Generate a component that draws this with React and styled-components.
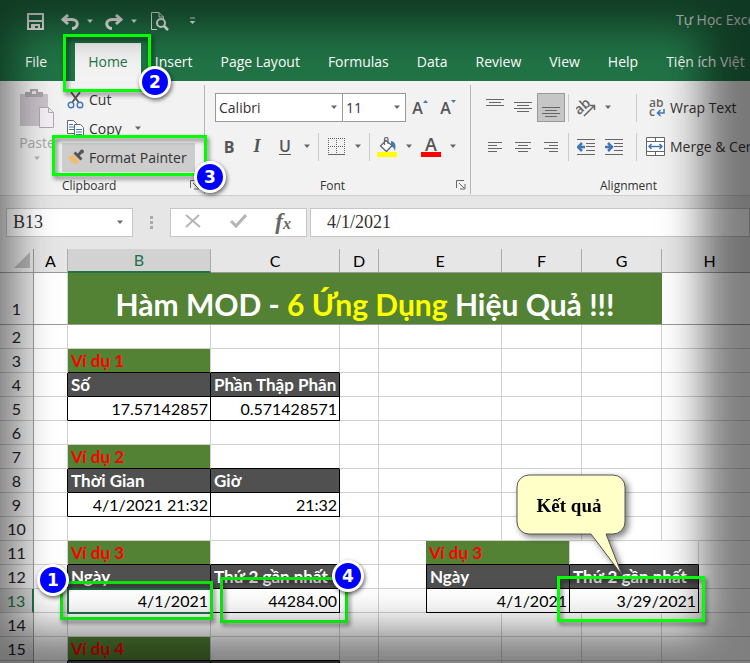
import styled, { createGlobalStyle } from 'styled-components'

const tabs = ['File', 'Home', 'Insert', 'Page Layout', 'Formulas', 'Data', 'Review', 'View', 'Help', 'Tiện ích Việt']

const columns = [
  { name: 'A', width: 34 },
  { name: 'B', width: 143 },
  { name: 'C', width: 129 },
  { name: 'D', width: 39 },
  { name: 'E', width: 123 },
  { name: 'F', width: 80 },
  { name: 'G', width: 80 },
  { name: 'H' },
]

// rows 2..16, only B and C hold values
const rows = [
  { n: 2 },
  { n: 3, b: 'Ví dụ 1', kind: 'title' },
  { n: 4, b: 'Số', c: 'Phần Thập Phân', kind: 'head' },
  { n: 5, b: '17.57142857', c: '0.571428571', kind: 'value' },
  { n: 6 },
  { n: 7, b: 'Ví dụ 2', kind: 'title' },
  { n: 8, b: 'Thời Gian', c: 'Giờ', kind: 'head' },
  { n: 9, b: '4/1/2021 21:32', c: '21:32', kind: 'value' },
  { n: 10 },
  { n: 11, b: 'Ví dụ 3', kind: 'title' },
  { n: 12, b: 'Ngày', c: 'Thứ 2 gần nhất', kind: 'head' },
  { n: 13, b: '4/1/2021', c: '44284.00', kind: 'value', active: true },
  { n: 14 },
  { n: 15, b: 'Ví dụ 4', kind: 'title' },
  { n: 16, kind: 'head' },
]

const Caret = ({ color = '#666' }) => (
  <svg width='8' height='5' viewBox='0 0 8 5'>
    <path d='M1 0.5h6L4 4z' fill={color} />
  </svg>
)

const Launcher = () => (
  <svg width='10' height='10' viewBox='0 0 10 10' fill='none' stroke='#666'>
    <path d='M0.5 8V0.5H8M3 3l5 5M9 4v5H4' />
  </svg>
)

// horizontal strokes given as [x1, x2, y]
const Lines = ({ lines, size = 18, children }) => (
  <svg width={size} height={size} viewBox='0 0 18 18' fill='none' stroke='#666' strokeWidth='1'>
    {lines.map(([a, b, y]) => (
      <path key={y} d={`M${a} ${y}.5H${b}`} />
    ))}
    {children}
  </svg>
)

const QuickAccess = () => (
  <Quick>
    <Tool $w={18} title='Save'>
      <svg width='17' height='17' viewBox='0 0 17 17' fill='none' stroke='#fff' strokeWidth='2'>
        <path d='M1 1h15v15H1zM1 8h15M5 16v-4h7v4' />
        <path d='M7 12v4' />
      </svg>
    </Tool>
    <Tool $w={18} title='Undo'>
      <svg width='18' height='16' viewBox='0 0 18 16' fill='none' stroke='#fff' strokeWidth='3'>
        <path d='M7 1L2 5.5 7 10M2.500 5.500H11c7 0 7 8.500 0 9' />
      </svg>
    </Tool>
    <Caret color='#fff' />
    <Tool $w={18} title='Redo'>
      <svg width='18' height='16' viewBox='0 0 18 16' fill='none' stroke='#fff' strokeWidth='3'>
        <path d='M11 1l5 4.500-5 4.500M15.500 5.500H7c-7 0-7 8.500 0 9' />
      </svg>
    </Tool>
    <Caret color='#fff' />
    <Tool $w={20} title='Print Preview'>
      <svg width='19' height='19' viewBox='0 0 19 19' fill='none' stroke='#fff'>
        <path d='M7 17.500H1.500V0.500H9L13.500 5v2M9 0.500V5h4.500' />
        <circle cx='11' cy='11' r='4' strokeWidth='2' />
        <path d='M14 14l4 4' strokeWidth='2.500' />
      </svg>
    </Tool>
    <Tool $w={8} title='Customize'>
      <svg width='7' height='9' viewBox='0 0 7 9'>
        <path d='M1 0.500h5v1H1zM0.500 4h6l-3 3z' fill='#fff' />
      </svg>
    </Tool>
  </Quick>
)

const ClipboardGroup = () => (
  <Group $width={205}>
    <ClipboardBody>
      <Paste>
        <svg width='36' height='40' viewBox='0 0 36 40'>
          <path d='M1 5h28v32H1z' fill='#c9c3c9' />
          <path d='M6 8V3h5V0h8v3h5v5z' fill='#a8a4a8' />
          <path d='M13 2h4v3h-4z' fill='#e8e6e8' />
          <path d='M20.500 18.500h9l5 5v15h-14z' fill='#f5f0f5' stroke='#b0a8b0' />
          <path d='M29.500 18.500v5h5' fill='none' stroke='#b0a8b0' />
        </svg>
        <span>Paste</span>
        <Caret color='#b5b5b5' />
      </Paste>
      <ClipList>
        <ClipButton>
          <svg width='18' height='18' viewBox='0 0 18 18' fill='none'>
            <path d='M4 1l7.500 10M13 1L5.500 11' stroke='#555' strokeWidth='2' />
            <circle cx='4' cy='14' r='2.800' stroke='#3f78b5' strokeWidth='1.400' />
            <circle cx='13' cy='14' r='2.800' stroke='#3f78b5' strokeWidth='1.400' />
          </svg>
          Cut
        </ClipButton>
        <ClipButton>
          <svg width='18' height='18' viewBox='0 0 18 18' fill='#fff' stroke='#666'>
            <path d='M0.500 0.500h6l3 3v10h-9z' />
            <path d='M2 4.500h4M2 7h5M2 9.500h5' stroke='#3f78b5' />
            <path d='M7.500 4.500h6l3 3v10h-9z' />
            <path d='M9 9.500h6M9 12h6M9 14.500h6' stroke='#3f78b5' />
          </svg>
          Copy
          <Caret />
        </ClipButton>
        <ClipButton $active>
          <svg width='18' height='18' viewBox='0 0 18 18'>
            <path d='M0.500 8.500L6 5.500l7 6.500-5 4z' fill='#efbe74' />
            <path d='M6.500 4.500L8.500 2.500l7 7-2 2z' fill='#555' />
            <path d='M11 6.500L14.500 2.500' stroke='#555' strokeWidth='3' />
            <circle cx='15' cy='2.500' r='2' fill='#555' />
          </svg>
          Format Painter
        </ClipButton>
      </ClipList>
    </ClipboardBody>
    <GroupLabel $left>
      Clipboard
      <Launcher />
    </GroupLabel>
  </Group>
)

const FontGroup = () => (
  <Group $width={266}>
    <GroupBody>
      <ToolRow>
        <Combo $width={128}>
          <select aria-label='Font name'>
            <option>Calibri</option>
          </select>
          <Caret />
        </Combo>
        <Combo $width={63} $joined>
          <select aria-label='Font size'>
            <option>11</option>
          </select>
          <Caret />
        </Combo>
        <Tool $w={28} title='Increase font size'>
          <Letter>A</Letter>
          <svg width='5' height='16' viewBox='0 0 5 16'>
            <path d='M0 3l2.500-3L5 3z' fill='#3f78b5' />
          </svg>
        </Tool>
        <Tool $w={28} title='Decrease font size'>
          <Letter>A</Letter>
          <svg width='5' height='16' viewBox='0 0 5 16'>
            <path d='M0 0h5L2.500 3z' fill='#3f78b5' />
          </svg>
        </Tool>
      </ToolRow>
      <ToolRow>
        <Tool $w={28}><Letter $heavy>B</Letter></Tool>
        <Tool $w={28}><Italic>I</Italic></Tool>
        <Tool $w={28}><Underline>U</Underline></Tool>
        <Tool $w={16} title='Underline style'><Caret /></Tool>
        <Separator />
        <Tool $w={28} title='Borders'>
          <svg width='17' height='17' viewBox='0 0 17 17' fill='none' stroke='#666'>
            <path d='M0.500 0v16M8.500 0v16M16.500 0v16M0 0.500h17M0 8.500h17' strokeDasharray='1 1' />
            <path d='M0 16.500h17' />
          </svg>
        </Tool>
        <Tool $w={16} title='Border style'><Caret /></Tool>
        <Separator />
        <Tool $w={28} title='Fill color'>
          <svg width='20' height='20' viewBox='0 0 20 20' fill='none'>
            <path d='M14 4c5 1 5 5 4 10-1-3-2-4-4-5z' fill='#3f78b5' />
            <path d='M9 3.500L3.500 9l6 5.500L15 8.500z' fill='#fff' stroke='#666' strokeWidth='1.300' />
            <path d='M7.500 8V2c0-2 3.500-2 3.500 0v5' stroke='#666' strokeWidth='1.200' />
            <path d='M0 15h20v5H0z' fill='#ff0' />
          </svg>
        </Tool>
        <Tool $w={16} title='Fill color menu'><Caret /></Tool>
        <Tool $w={28} title='Font color'>
          <FontColor>A</FontColor>
        </Tool>
        <Tool $w={16} title='Font color menu'><Caret /></Tool>
      </ToolRow>
    </GroupBody>
    <GroupLabel>
      <span>Font</span>
      <Launcher />
    </GroupLabel>
  </Group>
)

const AlignmentGroup = () => (
  <Group $width={316}>
    <GroupBody>
      <ToolRow>
        <Tool $w={28} title='Top align'><Lines lines={[[0, 18, 0], [3, 15, 3], [0, 18, 6]]} /></Tool>
        <Tool $w={28} title='Middle align'><Lines lines={[[0, 18, 3], [3, 15, 6], [0, 18, 9], [3, 15, 12]]} /></Tool>
        <Tool $w={28} $pressed title='Bottom align'><Lines lines={[[0, 18, 8], [3, 15, 11], [0, 18, 14], [3, 15, 17]]} /></Tool>
        <Separator />
        <Tool $w={28} title='Orientation'>
          <svg width='20' height='18' viewBox='0 0 20 18' fill='none' stroke='#666' strokeWidth='1.500'>
            <text x='0' y='13' transform='rotate(-42 6 11)' fontFamily='Open Sans, sans-serif' fontSize='14' fontWeight='600' fill='#666' stroke='none'>ab</text>
            <path d='M8 17L18 7M14 6.500h4.500V11' />
          </svg>
        </Tool>
        <Tool $w={16} title='Orientation menu'><Caret /></Tool>
        <Gap $w={17} />
        <Separator />
        <TextTool>
          <svg width='20' height='18' viewBox='0 0 20 18' fill='none'>
            <text x='3' y='8' fontFamily='Open Sans, sans-serif' fontSize='12' fontWeight='600' fill='#666'>ab</text>
            <text x='3' y='17' fontFamily='Open Sans, sans-serif' fontSize='12' fontWeight='600' fill='#666'>c</text>
            <path d='M18 10v4h-6M14.500 11L11.500 14l3 3' stroke='#3f78b5' strokeWidth='1.500' />
          </svg>
          Wrap Text
        </TextTool>
      </ToolRow>
      <ToolRow>
        <Tool $w={28} title='Align left'><Lines lines={[[2, 16, 4], [2, 11, 7], [2, 16, 10], [2, 11, 13]]} /></Tool>
        <Tool $w={28} title='Center'><Lines lines={[[1, 17, 4], [4, 14, 7], [1, 17, 10], [4, 14, 13]]} /></Tool>
        <Tool $w={28} title='Align right'><Lines lines={[[2, 16, 4], [7, 16, 7], [2, 16, 10], [7, 16, 13]]} /></Tool>
        <Separator />
        <Tool $w={28} title='Decrease indent'>
          <Lines lines={[[0, 18, 1], [9, 18, 5], [9, 18, 8], [9, 18, 12], [0, 18, 16]]}>
            <path d='M8 9H2M5 5L1 9l4 4' stroke='#3f78b5' strokeWidth='2.500' />
          </Lines>
        </Tool>
        <Tool $w={28} title='Increase indent'>
          <Lines lines={[[0, 18, 1], [9, 18, 5], [9, 18, 8], [9, 18, 12], [0, 18, 16]]}>
            <path d='M0 9h6M3 5l4 4-4 4' stroke='#3f78b5' strokeWidth='2.500' />
          </Lines>
        </Tool>
        <Gap $w={5} />
        <Separator />
        <TextTool>
          <svg width='20' height='19' viewBox='0 0 20 19' fill='#fff' stroke='#666'>
            <path d='M0.500 0.500h18v18h-18zM0.500 4.500h18M0.500 14.500h18M9.500 0.500v4M9.500 14.500v4' />
            <path d='M3 9.500h13M5.500 7L3 9.500 5.500 12M13.500 7l2.500 2.500-2.500 2.500' fill='none' stroke='#3f78b5' strokeWidth='1.500' />
          </svg>
          Merge &amp; Center
        </TextTool>
      </ToolRow>
    </GroupBody>
    <GroupLabel>
      <span>Alignment</span>
    </GroupLabel>
  </Group>
)

const FormulaBar = () => (
  <Formula>
    <NameBox>
      <input aria-label='Name box' defaultValue='B13' />
      <Caret />
    </NameBox>
    <Grip>
      <i />
      <i />
      <i />
    </Grip>
    <FormulaTools>
      <button title='Cancel'>
        <svg width='16' height='14' viewBox='0 0 16 14' fill='none' stroke='#b5b5b5' strokeWidth='2'>
          <path d='M1 1l14 12M14 1L1 13' />
        </svg>
      </button>
      <button title='Enter'>
        <svg width='17' height='14' viewBox='0 0 17 14' fill='none' stroke='#b5b5b5' strokeWidth='3'>
          <path d='M1 7l5 5L16 1' />
        </svg>
      </button>
      <button title='Insert function'>
        <Fx>f<small>x</small></Fx>
      </button>
    </FormulaTools>
    <FormulaInput aria-label='Formula' defaultValue='4/1/2021' />
  </Formula>
)

const Sheet = () => (
  <Grid>
    <colgroup>
      <col width='34' />
      {columns.map((col) => (
        <col key={col.name} width={col.width} />
      ))}
    </colgroup>
    <thead>
      <tr>
        <Corner>
          <svg width='16' height='16' viewBox='0 0 16 16'>
            <path d='M16 0v16H0z' fill='#b4b4b4' />
          </svg>
        </Corner>
        {columns.map((col) => (
          <ColHead key={col.name} $active={col.name === 'B'}>{col.name}</ColHead>
        ))}
      </tr>
    </thead>
    <tbody>
      <BannerRow>
        <RowHead $tall>1</RowHead>
        <Cell />
        <Banner colSpan={6}>
          Hàm MOD - <em>6 Ứng Dụng</em> Hiệu Quả !!!
        </Banner>
        <Cell />
      </BannerRow>
      {rows.map((row, i) => {
        const boxed = row.kind === 'head' || row.kind === 'value'
        const line = boxed || (rows[i + 1] && rows[i + 1].kind === 'head')
        return (
          <tr key={row.n}>
            <RowHead $active={row.active}>{row.n}</RowHead>
            <Cell $boxRight={boxed} />
            <Cell $kind={row.kind} $boxBottom={line} $boxRight={boxed} $active={row.active}>{row.b}</Cell>
            <Cell $kind={boxed ? row.kind : undefined} $boxBottom={line} $boxRight={boxed}>{row.c}</Cell>
            <Cell />
            <Cell />
            <Cell />
            <Cell />
            <Cell />
          </tr>
        )
      })}
    </tbody>
  </Grid>
)

const App = () => {
  return (
    <Page>
      <GlobalStyle />
      <TitleBar>
        <QuickAccess />
        <DocName>Tự Học Excel</DocName>
      </TitleBar>
      <TabBar>
        {tabs.map((tab) => (
          <Tab key={tab} href='#' $active={tab === 'Home'}>{tab}</Tab>
        ))}
      </TabBar>
      <Ribbon>
        <ClipboardGroup />
        <FontGroup />
        <AlignmentGroup />
      </Ribbon>
      <FormulaBar />
      <SheetArea>
        <Sheet />
        <PastedTable>
          <tbody>
            <tr>
              <Cell $kind='title' $boxBottom>Ví dụ 3</Cell>
              <Cell $boxBottom />
            </tr>
            <tr>
              <Cell $kind='head' $boxBottom $boxRight $boxLeft>Ngày</Cell>
              <Cell $kind='head' $boxBottom $boxRight>Thứ 2 gần nhất</Cell>
            </tr>
            <tr>
              <Cell $kind='value' $boxBottom $boxRight $boxLeft>4/1/2021</Cell>
              <Cell $kind='value' $boxBottom $boxRight>3/29/2021</Cell>
            </tr>
          </tbody>
        </PastedTable>
      </SheetArea>

      <Vignette />

      <Callout>
        <svg width='112' height='104' viewBox='0 0 112 104'>
          <path
            d='M13 1H97a12 12 0 0 1 12 12V48a12 12 0 0 1-12 12H90L106 101 75 60H13A12 12 0 0 1 1 48V13A12 12 0 0 1 13 1z'
            fill='#ffffc8'
            stroke='#555'
          />
        </svg>
        <span>Kết quả</span>
      </Callout>

      <Highlight $x={63} $y={34} $w={88} $h={58} />
      <Highlight $x={52} $y={135} $w={155} $h={41} />
      <Highlight $x={60} $y={581} $w={153} $h={39} $dim />
      <Highlight $x={220} $y={577} $w={128} $h={46} $dim />
      <Highlight $x={557} $y={576} $w={148} $h={46} />
      <Badge $x={53} $y={580}>1</Badge>
      <Badge $x={155} $y={82}>2</Badge>
      <Badge $x={210} $y={177}>3</Badge>
      <Badge $x={348} $y={576}>4</Badge>
    </Page>
  )
}

export default App

const uiFont = `'Open Sans', 'Noto Sans', sans-serif`
const sheetFont = `Lato, 'Open Sans', sans-serif`
const serifFont = `'Liberation Serif', serif`

const GlobalStyle = createGlobalStyle`
  * {
    box-sizing: border-box;
  }
  body {
    margin: 0;
    height: 100vh;
    overflow: hidden;
    background: #fff;
    font: 14px ${uiFont};
    color: #333;
  }
  button, input, select {
    font: inherit;
    color: inherit;
    border: 0;
    padding: 0;
    background: none;
    outline: none;
  }
  svg {
    flex: none;
  }
`
const Page = styled.div`
  position: relative;
  height: 100vh;
  overflow: hidden;
`
const TitleBar = styled.header`
  display: flex;
  align-items: center;
  justify-content: space-between;
  height: 43px;
  padding-left: 26px;
  background: #217346;
  color: #fff;
  overflow: hidden;
`
const Quick = styled.div`
  display: flex;
  align-items: center;
  gap: 7px;

  & > :nth-child(2) {
    margin-left: 10px;
  }
  & > :nth-child(4) {
    margin-left: 4px;
  }
  & > :nth-child(6) {
    margin-left: 4px;
  }
  & > :nth-child(7) {
    margin-left: 12px;
  }
`
const DocName = styled.span`
  flex: none;
  width: 74px;
  padding-bottom: 4px;
  white-space: nowrap;
`
const TabBar = styled.nav`
  display: flex;
  height: 38px;
  padding-left: 11px;
  background: #217346;
  overflow: hidden;
`
const Tab = styled.a`
  flex: none;
  padding: 0 ${(p) => (p.$active ? 13 : 14)}px;
  margin-left: ${(p) => (p.$active ? 14 : 0)}px;
  line-height: 38px;
  text-decoration: none;
  color: ${(p) => (p.$active ? '#217346' : '#fff')};
  background: ${(p) => (p.$active ? '#f3f3f3' : 'none')};
`
const Ribbon = styled.section`
  display: flex;
  height: 115px;
  padding: 4px 0 1px;
  background: #f2f2f2;
  border-bottom: 1px solid #cfcfcf;
  overflow: hidden;
`
const Group = styled.div`
  flex: none;
  display: flex;
  flex-direction: column;
  justify-content: space-between;
  width: ${(p) => p.$width}px;
  border-right: 1px solid #b5b5b5;
`
const GroupLabel = styled.div`
  display: flex;
  align-items: center;
  justify-content: space-between;
  height: 18px;
  padding: 0 4px 0 ${(p) => (p.$left ? 62 : 4)}px;
  font-size: 12px;

  & > span {
    flex: 1;
    text-align: center;
  }
`
const ClipboardBody = styled.div`
  display: flex;
  padding-left: 16px;
`
const Paste = styled.button`
  display: flex;
  flex-direction: column;
  align-items: center;
  gap: 4px;
  width: 46px;
  padding: 4px 4px 0 0;
  color: #aaa;
`
const ClipList = styled.div`
  display: flex;
  flex-direction: column;
`
const ClipButton = styled.button`
  display: flex;
  align-items: center;
  gap: 4px;
  width: 133px;
  height: 29px;
  padding-left: 5px;
  background: ${(p) => (p.$active ? '#cdcdcd' : 'none')};

  & > svg + svg {
    margin-left: 8px;
  }
`
const GroupBody = styled.div`
  display: flex;
  flex-direction: column;
  gap: 10px;
  padding: 8px 0 0 10px;
`
const ToolRow = styled.div`
  display: flex;
  align-items: center;
  height: 29px;
`
const Tool = styled.button`
  display: flex;
  align-items: center;
  justify-content: center;
  flex: none;
  width: ${(p) => p.$w}px;
  height: 29px;
  color: #555;
  background: ${(p) => (p.$pressed ? '#c6c6c6' : 'none')};
  outline: ${(p) => (p.$pressed ? '1px solid #999' : 'none')};
  outline-offset: -1px;
`
const TextTool = styled.button`
  display: flex;
  align-items: center;
  gap: 4px;
  padding-left: 6px;
  white-space: nowrap;
`
const Separator = styled.i`
  width: 1px;
  height: 28px;
  margin: 0 3px;
  background: #ccc;
`
const Gap = styled.i`
  width: ${(p) => p.$w}px;
`
const Letter = styled.span`
  font-weight: ${(p) => (p.$heavy ? 700 : 600)};
  font-size: 16px;
`
const Italic = styled.i`
  font-family: ${serifFont};
  font-weight: bold;
  font-size: 18px;
`
const Underline = styled.span`
  font-size: 16px;
  line-height: 16px;
  font-weight: 600;
  border-bottom: 1px solid #555;
`
const FontColor = styled.span`
  width: 20px;
  height: 20px;
  line-height: 15px;
  font-size: 18px;
  font-weight: 600;
  border-bottom: 5px solid #f00;
`
const Combo = styled.label`
  display: flex;
  align-items: center;
  width: ${(p) => p.$width}px;
  height: 29px;
  padding: 0 4px 0 3px;
  background: #fff;
  border: 1px solid #999;
  border-left-width: ${(p) => (p.$joined ? 0 : 1)}px;

  select {
    flex: 1;
    min-width: 0;
    appearance: none;
  }
`
const Formula = styled.div`
  display: flex;
  align-items: center;
  height: 53px;
  padding-left: 6px;
  background: #e6e6e6;
  font: 18px ${serifFont};
`
const NameBox = styled.label`
  display: flex;
  align-items: center;
  width: 127px;
  height: 29px;
  padding: 0 8px 0 6px;
  background: #fff;
  border: 1px solid #c6c6c6;

  input {
    flex: 1;
    min-width: 0;
  }
`
const Grip = styled.div`
  display: flex;
  flex-direction: column;
  gap: 2px;
  width: 37px;
  align-items: center;

  i {
    width: 3px;
    height: 3px;
    background: #aaa;
  }
`
const FormulaTools = styled.div`
  display: flex;
  align-items: center;
  justify-content: space-between;
  width: 137px;
  height: 29px;
  padding: 0 15px 0 14px;
  background: #fff;
  border: 1px solid #c6c6c6;
`
const Fx = styled.i`
  font-size: 23px;
  font-weight: bold;
  line-height: 24px;
  color: #666;

  small {
    font-size: 16px;
  }
`
const FormulaInput = styled.input`
  && {
    flex: 1;
    min-width: 0;
    height: 29px;
    margin-left: 3px;
    padding-left: 16px;
    background: #fff;
    border: 1px solid #c6c6c6;
  }
`
const SheetArea = styled.main`
  position: relative;
  font-family: ${sheetFont};
`
const Grid = styled.table`
  width: 100%;
  min-width: 758px;
  table-layout: fixed;
  border-collapse: separate;
  border-spacing: 0;
  font-size: 16px;
  color: #000;
`
const Corner = styled.td`
  height: 24px;
  padding: 0 3px 2px 0;
  text-align: right;
  line-height: 0;
  background: #e6e6e6;
  border-right: 1px solid #999;
  border-bottom: 1px solid #999;
`
const ColHead = styled.th`
  height: 24px;
  padding: 0;
  font-weight: normal;
  line-height: 20px;
  color: ${(p) => (p.$active ? '#217346' : '#000')};
  background: ${(p) => (p.$active ? '#d2d2d2' : '#e6e6e6')};
  border-right: 1px solid #aaa;
  border-bottom: ${(p) => (p.$active ? '2px solid #217346' : '1px solid #999')};
`
const RowHead = styled.th`
  height: 24px;
  padding: 0 0 ${(p) => (p.$tall ? 4 : 0)}px;
  vertical-align: bottom;
  font-weight: normal;
  line-height: 22px;
  color: ${(p) => (p.$active ? '#217346' : '#222')};
  background: ${(p) => (p.$active ? '#d2d2d2' : '#e6e6e6')};
  border-right: ${(p) => (p.$active ? '2px solid #217346' : '1px solid #999')};
  border-bottom: 1px solid #bbb;
`
const kinds = {
  title: 'background: #548235; color: #f00; font-weight: bold; font-size: 17px;',
  head: 'background: #505050; color: #fff; font-weight: bold; font-size: 17px;',
  value: 'text-align: right;',
}
const Cell = styled.td`
  height: 24px;
  padding: 0 2px 0 3px;
  line-height: 22px;
  white-space: nowrap;
  border-right: 1px solid ${(p) => (p.$boxRight ? '#000' : '#d0d0d0')};
  border-bottom: 1px solid ${(p) => (p.$boxBottom ? '#000' : '#d0d0d0')};
  border-left: ${(p) => (p.$boxLeft ? '1px solid #000' : '0')};
  outline: ${(p) => (p.$active ? '2px solid #217346' : 'none')};
  outline-offset: -1px;
  ${(p) => kinds[p.$kind]}
`
const BannerRow = styled.tr`
  height: 52px;

  & > * {
    border-bottom-color: #999;
  }
`
const Banner = styled.td`
  padding: 10px 0 0;
  line-height: 40px;
  text-align: center;
  font-size: 30px;
  font-weight: bold;
  white-space: nowrap;
  color: #fff;
  background: #548235;
  border-bottom: 1px solid #999;

  em {
    font-style: normal;
    color: #ff0;
  }
`
// floats over the grid, so it does not follow the column edges
const PastedTable = styled.table`
  position: absolute;
  left: 426px;
  top: 292px;
  width: 273px;
  table-layout: fixed;
  border-collapse: separate;
  border-spacing: 0;
  background: #fff;
  font-size: 16px;
  color: #000;

  td:first-child {
    width: 144px;
  }
`
const Vignette = styled.div`
  position: absolute;
  inset: -33px -12px -27px -46px;
  box-shadow: inset 0 0 40px 60px rgba(0, 0, 0, 0.5);
  pointer-events: none;
`
const Callout = styled.div`
  position: absolute;
  left: 516px;
  top: 474px;
  filter: drop-shadow(3px 3px 3px rgba(0, 0, 0, 0.5));

  span {
    position: absolute;
    left: 0;
    top: 0;
    width: 106px;
    text-align: center;
    font: bold 19px/64px ${serifFont};
    color: #000;
  }
`
const Highlight = styled.div`
  position: absolute;
  left: ${(p) => p.$x}px;
  top: ${(p) => p.$y}px;
  width: ${(p) => p.$w}px;
  height: ${(p) => p.$h}px;
  border: 3px solid ${(p) => (p.$dim ? '#0ee00e' : '#0f0')};
  filter: drop-shadow(2px 3px 2px rgba(0, 0, 0, 0.5));
  pointer-events: none;
`
const Badge = styled.span`
  position: absolute;
  left: ${(p) => p.$x - 16}px;
  top: ${(p) => p.$y - 16}px;
  width: 32px;
  height: 32px;
  border: 3px solid #fff;
  border-radius: 50%;
  background: #00f;
  box-shadow: 1px 2px 4px rgba(0, 0, 0, 0.6);
  color: #fff;
  text-align: center;
  font: bold 17px/26px 'DejaVu Sans', sans-serif;
`
